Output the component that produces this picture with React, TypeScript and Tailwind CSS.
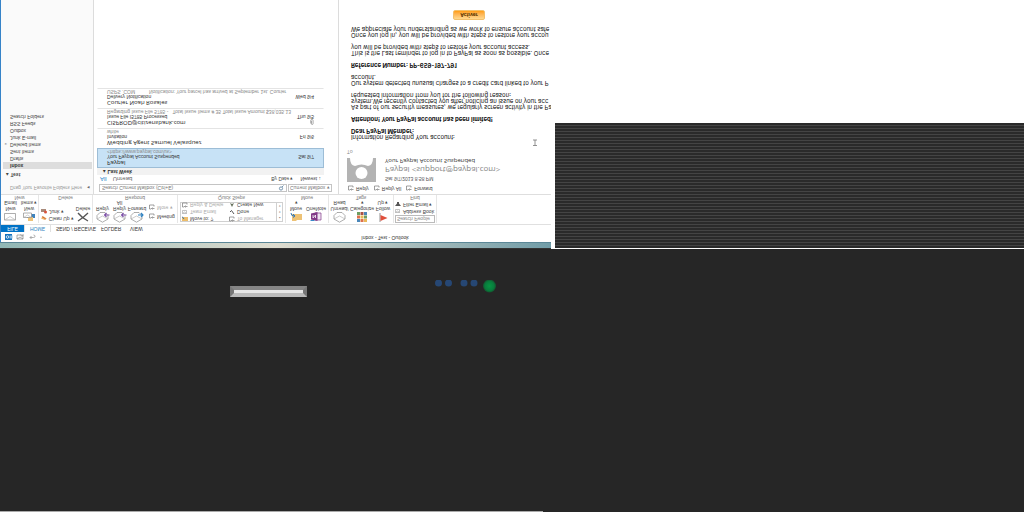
import React from "react";

const folders = ["Inbox", "Drafts", "Sent Items", "Deleted Items", "Junk E-mail", "Outbox", "RSS Feeds", "Search Folders"];

const messages = [
  { from: "Paypal", subject: "Your Paypal Account Suspended", preview: "<https://www.paypal.com/us>", date: "Sat 9/7", selected: true },
  { from: "Wedding Agent Samuel Velasquez", subject: "Invitation", preview: "white", date: "Fri 9/6" },
  { from: "CISPROD@citizensbank.com", subject: "Issue File I5785 Processed", preview: "Regarding Issue File 5785 -   Total Issue Items # 35 Total Issue Amount $38,035.13", date: "Thu 9/5", clip: true },
  { from: "Courier Noah Rosales", subject: "Delivery Notification", preview: "USPS .COM          Notification: Your parcel has arrived at September 1st. Courier", date: "Wed 9/4" },
];

function Envelope({ arrow }: { arrow?: string }) {
  return (
    <svg viewBox="0 0 14 11" className="h-[11px] w-[14px]" fill="none">
      <path d="M1 4 6.500.8 12 4v3.500L9 10.500H4L1 7.500Z" fill="#fff" stroke="#8a8a8a" strokeWidth=".7" />
      <path d="M1 4 6.500 7 12 4" stroke="#aaa" strokeWidth=".6" />
      {arrow === "left" && <path d="M13.500 8H8.500M10.500 6l-2 2 2 2" stroke="#7d4fa8" strokeWidth="1.100" />}
      {arrow === "right" && <path d="M8 8H13M11 6l2 2-2 2" stroke="#2f83c4" strokeWidth="1.100" />}
    </svg>
  );
}

function MailIcon({ calendar }: { calendar?: boolean }) {
  return (
    <svg viewBox="0 0 13 10" className="h-[10px] w-[13px]" fill="none">
      {calendar && <path d="M4 4h8v4H4z" fill="#3f83bd" />}
      {calendar && <path d="M5 1h5v4H5z" fill="#edc276" />}
      <path d={calendar ? "M.5 4.500h8v4.500h-8z" : "M.5 2h11v6.500H.5z"} fill="#fff" stroke="#8b8b8b" strokeWidth=".7" />
      <path d={calendar ? "m.5 4.500 4 2.500 4-2.500" : "m.5 2 5.500 3.500L11.500 2"} stroke="#b0b0b0" strokeWidth=".6" />
    </svg>
  );
}

function SmallReply() {
  return (
    <svg viewBox="0 0 6 6" className="size-[6px] shrink-0" fill="none" stroke="#777" strokeWidth=".7">
      <path d="M2 1H.5v4h4.500V3.500M5.500 1.500h-3M3.500.5l-1 1 1 1" />
    </svg>
  );
}

function Big({ icon, lines, width }: { icon: React.ReactNode; lines: string[]; width: string }) {
  return (
    <button className={`flex ${width} shrink-0 flex-col items-center text-[5px] leading-[6px] text-[#444]`}>
      <span className="flex h-[11px] items-center">{icon}</span>
      {lines.map((l) => <span key={l}>{l}</span>)}
    </button>
  );
}

function Small({ icon, label, dim }: { icon: React.ReactNode; label: string; dim?: boolean }) {
  return (
    <button className={`flex h-[7px] items-center gap-[2px] text-[5px] leading-[7px] ${dim ? "text-[#aaa]" : "text-[#444]"}`}>
      {icon}
      {label}
    </button>
  );
}

function Group({ name, width, children }: { name: string; width: string; children: React.ReactNode }) {
  return (
    <section className={`flex ${width} shrink-0 flex-col justify-between border-r border-[#e6e6e6] whitespace-nowrap`}>
      <div className="flex items-start">{children}</div>
      <h2 className="text-center text-[5px] leading-[5px] text-[#777]">{name}</h2>
    </section>
  );
}

function TitleBar() {
  return (
    <header className="flex h-[10px] items-center bg-white pl-[4px] text-[5px] text-[#333]">
      <svg viewBox="0 0 44 8" className="h-[8px] w-[44px]" fill="none">
        <path d="M0 1h7v6H0z" fill="#1572bd" />
        <circle cx="2.500" cy="4" r="1.300" stroke="#fff" strokeWidth=".8" />
        <path d="M4.500 2.500h3v3h-3z" fill="#8bbce2" />
        <path d="M12 2h6v4h-6zl3 2 3-2M15.500 6.500l1.500-2 1.500 2" stroke="#888" strokeWidth=".7" />
        <path d="M25 3.500h3.500q1.500 0 1.500 1.200T28.500 6M26.500 2 25 3.500 26.500 5" stroke="#999" strokeWidth=".8" />
        <path d="M35 3.500h2l-1 1z" fill="#777" />
      </svg>
      <h1 className="flex-1 pl-[170px] text-center">Inbox - Test - Outlook</h1>
    </header>
  );
}

function Tabs() {
  return (
    <nav className="flex h-[8px] items-stretch border-b border-[#e0e0e0] bg-white text-[5px] leading-[7px] text-[#333]">
      <a href="#file" className="w-[23px] bg-[#0072c6] text-center text-white">FILE</a>
      <a href="#home" className="w-[27px] border-x border-[#e0e0e0] text-center text-[#2b7fc0]">HOME</a>
      <a href="#send" className="w-[45px] pl-[5px]">SEND / RECEIVE</a>
      <a href="#folder" className="w-[29px] pl-[5px]">FOLDER</a>
      <a href="#view" className="pl-[5px]">VIEW</a>
    </nav>
  );
}

const dot = (
  <svg viewBox="0 0 6 6" className="size-[6px] shrink-0" fill="none" stroke="#aaa" strokeWidth=".7"><path d="M.5 1.500h4v3h-4zl2 1.500 2-1.500" /></svg>
);

function Ribbon() {
  return (
    <div className="flex h-[30px] overflow-hidden border-b border-[#dedede] bg-white pt-px">
      <Group name="New" width="w-[38px]">
        <Big width="w-[19px]" icon={<MailIcon />} lines={["New", "Email"]} />
        <Big width="w-[18px]" icon={<MailIcon calendar />} lines={["New", "Items ▾"]} />
      </Group>
      <Group name="Delete" width="w-[54px]">
        <div className="flex w-[35px] flex-col pt-px pl-[2px]">
          <Small label="Clean Up ▾" icon={<svg viewBox="0 0 6 6" className="size-[6px]"><path d="M0 2.500 4 1l2 1.500L2 5z" fill="#edb566" /><path d="M1 4.500 5 2" stroke="#d26a3b" /></svg>} />
          <Small label="Junk ▾" icon={<svg viewBox="0 0 6 6" className="size-[6px]"><path d="M0 2h5v3H0z" fill="#a88a7a" /><circle cx="4.500" cy="2" r="1.500" fill="#d8533b" /></svg>} />
        </div>
        <Big width="w-[18px]" lines={["Delete"]} icon={<svg viewBox="0 0 12 10" className="h-[10px] w-[12px]"><path d="M1 1q5 3 10 8M11 1Q5 4 1 9" fill="none" stroke="#555" strokeWidth="1.300" /></svg>} />
      </Group>
      <Group name="Respond" width="w-[85px]">
        <Big width="w-[19px]" icon={<Envelope arrow="left" />} lines={["Reply"]} />
        <Big width="w-[15px]" icon={<Envelope arrow="left" />} lines={["Reply", "All"]} />
        <Big width="w-[20px]" icon={<Envelope arrow="right" />} lines={["Forward"]} />
        <div className="flex flex-col gap-[2px] pt-[3px] pl-[2px]">
          <Small label="Meeting" icon={<SmallReply />} />
          <Small label="More ▾" icon={<SmallReply />} dim />
        </div>
      </Group>
      <Group name="Quick Steps" width="w-[108px]">
        <div className="mx-[2px] mt-px flex h-[20px] flex-1 border border-[#d0d0d0] pl-px">
          <div className="flex flex-1 flex-col justify-center">
            <Small label="Move to: ?" icon={<svg viewBox="0 0 6 6" className="size-[6px]"><path d="M0 1h6v4H0z" fill="#edbd6b" /><path d="M0 5.500 2 3" stroke="#3277b5" /></svg>} />
            <Small dim label="Team Email" icon={dot} />
            <Small dim label="Reply & Delete" icon={<SmallReply />} />
          </div>
          <div className="flex flex-1 flex-col justify-center">
            <Small dim label="To Manager" icon={<SmallReply />} />
            <Small label="Done" icon={<svg viewBox="0 0 6 6" className="size-[6px]" fill="none" stroke="#555"><path d="m1 3 1.500 1.500L5 1" /></svg>} />
            <Small label="Create New" icon={<svg viewBox="0 0 6 6" className="size-[6px]"><path d="m1 5 2-4 2 4-2-1z" fill="#66705b" /></svg>} />
          </div>
          <div className="flex w-[6px] flex-col items-center justify-around border-l border-[#d0d0d0] text-[3px] leading-[4px] text-[#777]">
            <span>▴</span><span>▾</span><span>▾</span>
          </div>
        </div>
      </Group>
      <Group name="Move" width="w-[43px]">
        <Big width="w-[20px]" lines={["Move", "▾"]} icon={<svg viewBox="0 0 13 10" className="h-[10px] w-[13px]"><path d="M2 1h4l1 1h5v6H2z" fill="#edc276" /><path d="M1 9q0-3 3-3M3 4.500l2 1.500-2 2" fill="none" stroke="#2f78bd" /></svg>} />
        <Big width="w-[20px]" lines={["OneNote"]} icon={<svg viewBox="0 0 12 10" className="h-[10px] w-[12px]"><path d="M5 2h6v7H5z" fill="#f0e4f3" stroke="#813987" strokeWidth=".7" /><path d="M1 2.500 7.500 1v9L1 8.500z" fill="#813987" /><path d="M3 7V4l2.500 3V4" fill="none" stroke="#fff" strokeWidth=".8" /><path d="M.5 1.500h4" stroke="#3988c8" /></svg>} />
      </Group>
      <Group name="Tags" width="w-[65px]">
        <Big width="w-[21px]" lines={["Unread/", "Read"]} icon={<Envelope />} />
        <Big width="w-[24px]" lines={["Categorize", "▾"]} icon={<svg viewBox="0 0 10 10" className="size-[10px]"><path d="M0 0h3v3H0zM7 7h3v3H7z" fill="#4b87ba" /><path d="M3.500 0h3v3h-3zM0 3.500h3v3H0z" fill="#dd714a" /><path d="M7 0h3v3H7zM3.500 3.500h3v3h-3z" fill="#e9b857" /><path d="M7 3.500h3v3H7zM0 7h3v3H0z" fill="#6e9d61" /><path d="M3.500 7h3v3h-3z" fill="#aa5345" /></svg>} />
        <Big width="w-[18px]" lines={["Follow", "Up ▾"]} icon={<svg viewBox="0 0 9 10" className="h-[10px] w-[9px]"><path d="M1 0v9" stroke="#777" strokeWidth=".8" /><path d="m1.500 1 7 3-7 3z" fill="#df4f3c" /></svg>} />
      </Group>
      <Group name="Find" width="w-[43px]">
        <div className="flex w-full flex-col px-px">
          <input aria-label="Search People" placeholder="Search People" className="h-[8px] w-full border border-[#bbb] px-px text-[5px] leading-[6px] placeholder:text-[#888]" />
          <Small label="Address Book" icon={dot} />
          <Small label="Filter Email ▾" icon={<svg viewBox="0 0 6 6" className="size-[6px]"><path d="M0 1h6L4 3.500V5H2V3.500z" fill="#555" /></svg>} />
        </div>
      </Group>
    </div>
  );
}

function Sidebar() {
  return (
    <aside className="border-r border-[#dcdcdc] bg-[#fafafa] pr-px pl-[2px] text-[5px] leading-[7px] text-[#444]">
      <p className="flex h-[16px] items-center justify-between pr-[2px] pb-[4px] pl-[7px] text-[#999]">
        Drag Your Favorite Folders Here <span className="text-[#666]">◂</span>
      </p>
      <h2 className="h-[9px] pl-[3px] font-semibold text-[#444]">▴ Test</h2>
      <ul>
        {folders.map((f, i) => (
          <li key={f} className={i === 0 ? "bg-[#dddddd] font-bold text-[#333]" : ""}>
            <a href={`#folder-${i}`} className="flex h-[7px] items-center">
              <span className="w-[7px] pl-[2px] text-[4px]">{f === "Deleted Items" ? "▹" : ""}</span>{f}
            </a>
          </li>
        ))}
      </ul>
    </aside>
  );
}

function MessageList() {
  return (
    <section className="flex flex-col border-r border-[#dcdcdc] bg-white pl-[3px] text-[5px] text-[#444]">
      <div className="flex h-[11px] items-center gap-px pr-[6px] pl-[2px]">
        <div className="flex h-[8px] min-w-0 flex-1 items-center border border-[#c4c4c4]">
          <input aria-label="Search Current Mailbox" placeholder="Search Current Mailbox (Ctrl+E)" className="h-[6px] min-w-0 flex-1 px-[2px] text-[5px] leading-[6px] placeholder:text-[#777]" />
          <svg viewBox="0 0 7 6" className="mr-px h-[6px] w-[7px]" fill="none" stroke="#557b9b" strokeWidth=".8"><circle cx="3" cy="2.500" r="1.600" /><path d="m4 4 1.500 1.500" /></svg>
        </div>
        <select aria-label="Search scope" className="h-[8px] w-[44px] appearance-none border border-[#c4c4c4] bg-white px-px text-[5px] leading-[6px] text-[#777]">
          <option>Current Mailbox ▾</option>
        </select>
      </div>
      <div className="flex h-[8px] items-center pr-[17px] pl-[3px] leading-[8px]">
        <button className="text-[6px] text-[#2b86cc]">All</button>
        <button className="ml-[6px] flex-1 text-left text-[6px] text-[#666]">Unread</button>
        <button>By Date ▾</button>
        <button className="ml-[7px]">Newest ↓</button>
      </div>
      <h2 className="mr-[14px] h-[7px] bg-[#f2f2f2] pl-[6px] text-[5px] leading-[7px] font-bold text-[#333]">▴ Last Week</h2>
      <ul className="mr-[14px]">
        {messages.map((m) => (
          <li key={m.from} className={`flex h-[20px] justify-between border pt-px pr-[9px] pl-[9px] ${m.selected ? "border-[#9dbdd6] bg-[#c7e2f6]" : "border-transparent border-b-[#e4e4e4]"}`}>
            <div className="min-w-0 whitespace-pre">
              <p className="font-['Open_Sans',sans-serif] text-[6px] leading-[7px] text-[#222]">{m.from}</p>
              <p className="text-[5px] leading-[5px] text-[#333]">{m.subject}</p>
              <p className="text-[5px] leading-[5px] text-[#888]">{m.preview}</p>
            </div>
            <div className="flex shrink-0 flex-col items-end leading-[5px] text-[#333]">
              <span className="flex h-[7px] items-center">
                {m.clip && <svg viewBox="0 0 4 6" className="h-[6px] w-[4px]" fill="none" stroke="#888" strokeWidth=".7"><path d="M.7 1.500v3q0 1 1.200 1t1.200-1V1.200Q3 .5 2.200.5T1.500 1.200v3" /></svg>}
              </span>
              <span>{m.date}</span>
            </div>
          </li>
        ))}
      </ul>
    </section>
  );
}

function Reader() {
  return (
    <article className="overflow-hidden bg-white pt-px pl-[8px] font-['Open_Sans',sans-serif] whitespace-nowrap">
      <div className="flex h-[10px] items-center gap-[5px] pl-px font-['Liberation_Sans',sans-serif] text-[5px] text-[#444]">
        {["Reply", "Reply All", "Forward"].map((a) => <button key={a} className="flex items-center gap-[2px]"><SmallReply />{a}</button>)}
      </div>
      <header className="flex gap-[9px] pt-px">
        <svg viewBox="0 0 29 24" className="h-[24px] w-[29px]">
          <path d="M0 0h29v24H0z" fill="#b3b3b3" />
          <circle cx="14.500" cy="9" r="6" fill="#fff" />
          <path d="M3 24q0-7 5-8 6.500 3 13 0 5 1 5 8z" fill="#fff" />
        </svg>
        <div className="text-[#555]">
          <p className="font-['Liberation_Sans',sans-serif] text-[5px] leading-[7px]">Sat 9/7/2013 8:58 PM</p>
          <h2 className="text-[8px] leading-[10px] text-[#888]">Paypal &lt;support@paypal.com&gt;</h2>
          <p className="text-[6px] leading-[9px] text-[#333]">Your Paypal Account Suspended</p>
        </div>
      </header>
      <p className="pt-px text-[5px] leading-[7px] text-[#888]">To</p>
      <div className="flex flex-col gap-[6px] pt-[8px] pl-[4px] font-['Inter',sans-serif] text-[6px] leading-[6px] text-[#111]">
        <p>Information Regarding Your account:<br /><b>Dear PayPal Member:</b></p>
        <p><b>Attention! Your PayPal account has been limited!</b></p>
        <p>As part of our security measures, we regularly screen activity in the Pa<br />system.We recently contacted you after noticing an issue on your acc<br />requested information from you for the following reason:</p>
        <p>Our system detected unusual charges to a credit card linked to your P<br />account.</p>
        <p><b>Reference Number: PP-659-197-791</b></p>
        <p>This is the Last reminder to log in to PayPal as soon as possible. Once<br />you will be provided with steps to restore your account access.</p>
        <p>Once you log in, you will be provided with steps to restore your accou<br />We appreciate your understanding as we work to ensure account safe</p>
        <button className="ml-[102px] h-[10px] w-[32px] rounded-[2px] border border-[#f3c06b] bg-linear-to-b from-[#ffd98e] to-[#ff9d0a] text-[5px] leading-[8px] font-bold text-[#553300]">Activer</button>
      </div>
    </article>
  );
}

export default function App() {
  return (
    <main className="flex min-h-screen flex-col bg-[#262626] font-['Liberation_Sans',sans-serif]">
      <div className="relative grid grid-cols-[minmax(0,551fr)_minmax(0,473fr)] bg-white">
        <div className="flex h-[249px] -scale-y-100 flex-col overflow-hidden">
          <div className="h-[7px] border-t border-b border-t-[#333] border-b-[#5b8797] bg-linear-to-r from-[#91b7b5] via-[#dedccf] to-[#719da8]" />
          <div className="flex flex-1 flex-col border-l border-[#3683c8]">
            <TitleBar />
            <Tabs />
            <Ribbon />
            <div className="grid flex-1 grid-cols-[minmax(0,93fr)_minmax(0,245fr)_minmax(0,212fr)]">
              <Sidebar />
              <MessageList />
              <Reader />
            </div>
          </div>
        </div>
        <div className="flex flex-col pl-[4px]">
          <div className="mt-[123px] mb-px flex-1 bg-[repeating-linear-gradient(to_bottom,#2a2a2a_0px,#2a2a2a_2px,#444444_2px,#444444_3px)]" />
        </div>
        <svg viewBox="0 0 6 8" className="absolute top-[139px] left-[52%] h-[8px] w-[6px]" fill="none" stroke="#777" strokeWidth=".8"><path d="M1 1h4M3 1v5.500M1 6.500h4" /></svg>
      </div>
      <div className="flex items-start pt-[31px] pl-[230px]">
        <div className="mt-[6px] h-[11px] w-[77px] border-[4px] border-t-[#858585] border-r-[#777] border-b-[#bbbbbb] border-l-[#777] bg-[#e6e6e6]" />
        <svg viewBox="0 0 64 14" className="ml-[127px] h-[14px] w-[64px]">
          <defs>
            <radialGradient id="green"><stop stopColor="#079443" /><stop offset=".7" stopColor="#087c3c" /><stop offset="1" stopColor="#15512e" /></radialGradient>
          </defs>
          {[4.5, 14.5, 30, 40].map((x) => <circle key={x} cx={x} cy="3" r="3.500" fill="#264774" />)}
          <circle cx="55.500" cy="6" r="6.500" fill="url(#green)" />
        </svg>
      </div>
      <div className="mt-auto h-px w-[53%] bg-[#aaa]" />
    </main>
  );
}
